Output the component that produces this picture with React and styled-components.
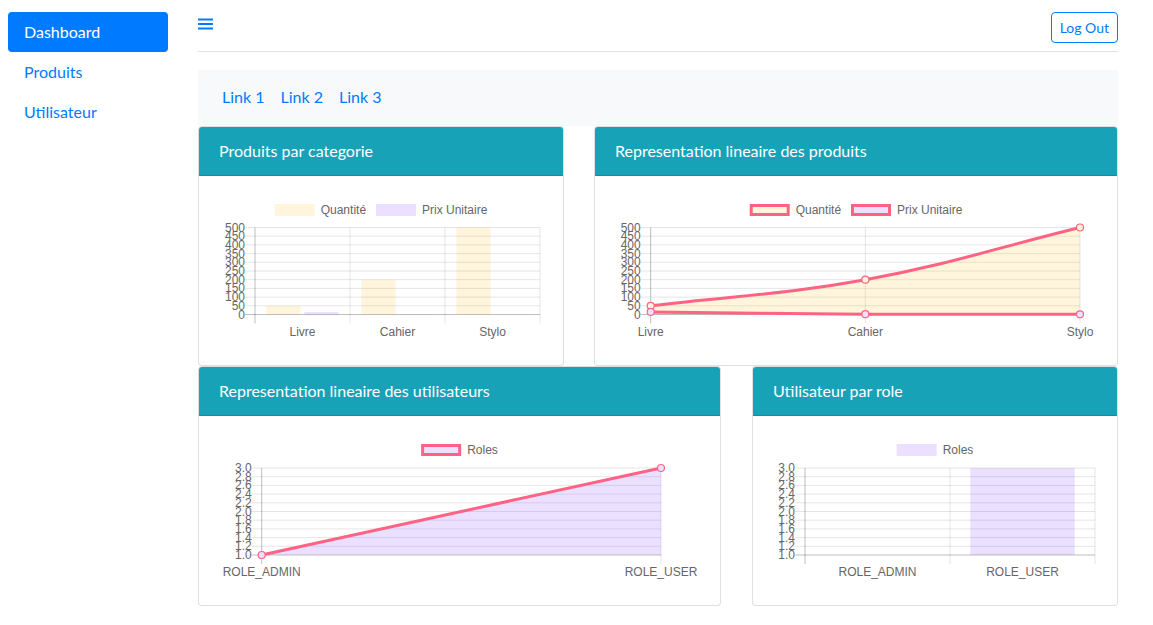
import React from "react";
import styled, { createGlobalStyle } from "styled-components";

const BLUE = "#007bff";
const TEAL = "#17a2b8";
const PINK = "rgb(255,99,132)";
const YELLOW_FILL = "rgba(255,206,86,0.2)";
const PURPLE_FILL = "rgba(153,102,255,0.2)";
const GRID = "rgba(0,0,0,0.1)";
const AXIS = "rgba(0,0,0,0.25)";

const GlobalStyle = createGlobalStyle`
  html, body { margin: 0; padding: 0; background: #fff; }
  body { font-family: Lato, "Noto Sans", "Liberation Sans", sans-serif; color: #212529; }
  * { box-sizing: border-box; }
`;

const Layout = styled.div`
  display: flex;
  min-height: 625px;
`;

const Sidebar = styled.nav`
  width: 198px;
  flex-shrink: 0;
  padding: 12px 30px 0 8px;
  display: flex;
  flex-direction: column;
`;

const NavItem = styled.a`
  height: 40px;
  display: flex;
  align-items: center;
  padding: 0 16px 2px;
  border-radius: 4px;
  font-size: 16px;
  text-decoration: none;
  color: ${(p) => (p.$active ? "#fff" : BLUE)};
  background: ${(p) => (p.$active ? BLUE : "transparent")};
`;

const Main = styled.main`
  flex: 1;
  min-width: 0;
  padding-right: 35px;
`;

const TopBar = styled.header`
  height: 52px;
  border-bottom: 1px solid #dee2e6;
  display: flex;
  justify-content: space-between;
  align-items: flex-start;
`;

const MenuButton = styled.button`
  margin-top: 18px;
  padding: 0;
  border: 0;
  background: none;
  color: ${BLUE};
  line-height: 0;
  cursor: pointer;
`;

const LogoutButton = styled.button`
  margin-top: 12px;
  height: 31px;
  padding: 0 8px 1px;
  border: 1px solid ${BLUE};
  border-radius: 4px;
  background: #fff;
  color: ${BLUE};
  font-family: inherit;
  font-size: 14px;
  cursor: pointer;
`;

const SubNav = styled.nav`
  margin-top: 18px;
  height: 56px;
  background: #f8f9fa;
  display: flex;
  align-items: center;
  padding: 0 0 4px 16px;
`;

const SubNavLink = styled.a`
  padding: 0 8px;
  font-size: 16px;
  color: ${BLUE};
  text-decoration: none;
`;

const CardRow = styled.div`
  display: grid;
  grid-template-columns: ${(p) => p.$cols};
  column-gap: ${(p) => p.$gap};
`;

const Card = styled.section`
  border: 1px solid rgba(0, 0, 0, 0.125);
  border-radius: 4px;
  background: #fff;
  overflow: hidden;
`;

const CardHeader = styled.h5`
  margin: 0;
  height: 49px;
  padding: 0 20px 2px;
  display: flex;
  align-items: center;
  background: ${TEAL};
  color: #fff;
  font-size: 16px;
  font-weight: 400;
  border-bottom: 1px solid rgba(0, 0, 0, 0.125);
`;

const ChartSvg = styled.svg`
  display: block;
  width: 100%;
  height: 189px;
  text {
    font-family: "Liberation Sans", Arial, sans-serif;
    font-size: 12px;
    fill: #666;
  }
`;

/* ---------- chart helpers ---------- */

const TEXT_W = { "Quantité": 45.3, "Prix Unitaire": 65.3, Roles: 30.7 };

function Legend({ width, items, stroked }) {
  const itemW = items.map((it) => 46 + (TEXT_W[it.label] || 40));
  const total = itemW.reduce((a, b) => a + b, 0) + 10 * (items.length - 1);
  let x = width / 2 - total / 2;
  return (
    <g>
      {items.map((it, i) => {
        const bx = x;
        x += itemW[i] + 10;
        return (
          <g key={it.label}>
            <rect
              x={bx + (stroked ? 1.5 : 0)}
              y={stroked ? 29.5 : 28}
              width={stroked ? 37 : 40}
              height={stroked ? 9 : 12}
              fill={it.fill}
              stroke={stroked ? PINK : "none"}
              strokeWidth={stroked ? 3 : 0}
            />
            <text x={bx + 46} y={34} dominantBaseline="central">
              {it.label}
            </text>
          </g>
        );
      })}
    </g>
  );
}

function Axes({ plot, yLabels, vLines, xLabels }) {
  const { l, r, t, b } = plot;
  const n = yLabels.length;
  const step = (b - t) / (n - 1);
  return (
    <g>
      {yLabels.map((lab, i) => {
        const y = t + i * step;
        const isZero = i === n - 1;
        return (
          <g key={lab}>
            <line x1={l - 10} x2={r} y1={y} y2={y} stroke={isZero ? AXIS : GRID} strokeWidth="1" />
            <text x={l - 10} y={y} textAnchor="end" dominantBaseline="central">
              {lab}
            </text>
          </g>
        );
      })}
      {vLines.map((x, i) => (
        <line
          key={i}
          x1={x}
          x2={x}
          y1={t}
          y2={b + 9}
          stroke={i === 0 ? AXIS : GRID}
          strokeWidth="1"
        />
      ))}
      {xLabels.map((xl) => (
        <text key={xl.label} x={xl.x} y={b + 17} textAnchor="middle" dominantBaseline="central">
          {xl.label}
        </text>
      ))}
    </g>
  );
}

function splinePath(pts, t, top, bottom) {
  const clamp = (v) => Math.max(top, Math.min(bottom, v));
  const cps = pts.map((p, i) => {
    const prev = pts[i - 1] || p;
    const next = pts[i + 1] || p;
    const d01 = Math.hypot(p.x - prev.x, p.y - prev.y);
    const d12 = Math.hypot(next.x - p.x, next.y - p.y);
    let s01 = d01 / (d01 + d12);
    let s12 = d12 / (d01 + d12);
    if (isNaN(s01)) s01 = 0;
    if (isNaN(s12)) s12 = 0;
    const fa = t * s01;
    const fb = t * s12;
    return {
      px: p.x - fa * (next.x - prev.x),
      py: clamp(p.y - fa * (next.y - prev.y)),
      nx: p.x + fb * (next.x - prev.x),
      ny: clamp(p.y + fb * (next.y - prev.y)),
    };
  });
  let d = `M${pts[0].x},${pts[0].y}`;
  for (let i = 1; i < pts.length; i++) {
    d += ` C${cps[i - 1].nx},${cps[i - 1].ny} ${cps[i].px},${cps[i].py} ${pts[i].x},${pts[i].y}`;
  }
  return d;
}

function LineSeries({ pts, fill, plot }) {
  const d = splinePath(pts, 0.4, plot.t, plot.b);
  const first = pts[0];
  const last = pts[pts.length - 1];
  const area = `${d} L${last.x},${plot.b} L${first.x},${plot.b} Z`;
  return (
    <g>
      <path d={area} fill={fill} stroke="none" />
      <path d={d} fill="none" stroke={PINK} strokeWidth="3" />
    </g>
  );
}

function Points({ pts, fill }) {
  return (
    <g>
      {pts.map((p, i) => (
        <g key={i}>
          <circle cx={p.x} cy={p.y} r="3.5" fill="#fff" />
          <circle cx={p.x} cy={p.y} r="3.5" fill={fill} stroke={PINK} strokeWidth="1.2" />
        </g>
      ))}
    </g>
  );
}

const PRODUCT_Y = ["500", "450", "400", "350", "300", "250", "200", "150", "100", "50", "0"];
const ROLE_Y = ["3.0", "2.8", "2.6", "2.4", "2.2", "2.0", "1.8", "1.6", "1.4", "1.2", "1.0"];
const PRODUCTS = ["Livre", "Cahier", "Stylo"];
const QTY = [50, 200, 500];
const PRICE = [15, 2, 1];

function ProductBarChart() {
  const W = 364;
  const plot = { l: 56, r: 341, t: 51.5, b: 138.5 };
  const cw = (plot.r - plot.l) / 3;
  const h = plot.b - plot.t;
  const slot = cw * 0.4;
  const bw = slot * 0.9;
  return (
    <ChartSvg viewBox={`0 0 ${W} 189`}>
      <Legend
        width={W}
        items={[
          { label: "Quantité", fill: YELLOW_FILL },
          { label: "Prix Unitaire", fill: PURPLE_FILL },
        ]}
      />
      {PRODUCTS.map((p, i) => {
        const c = plot.l + cw * (i + 0.5);
        const hq = (QTY[i] / 500) * h;
        const hp = (PRICE[i] / 500) * h;
        return (
          <g key={p}>
            <rect x={c - slot + slot * 0.05} y={plot.b - hq} width={bw} height={hq} fill={YELLOW_FILL} />
            <rect x={c + slot * 0.05} y={plot.b - hp} width={bw} height={hp} fill={PURPLE_FILL} />
          </g>
        );
      })}
      <Axes
        plot={plot}
        yLabels={PRODUCT_Y}
        vLines={[0, 1, 2, 3].map((i) => plot.l + cw * i)}
        xLabels={PRODUCTS.map((p, i) => ({ label: p, x: plot.l + cw * (i + 0.5) }))}
      />
    </ChartSvg>
  );
}

function ProductLineChart() {
  const W = 522;
  const plot = { l: 55.7, r: 485, t: 51.5, b: 138.5 };
  const xs = [plot.l, (plot.l + plot.r) / 2, plot.r];
  const h = plot.b - plot.t;
  const q = xs.map((x, i) => ({ x, y: plot.b - (QTY[i] / 500) * h }));
  const pr = xs.map((x, i) => ({ x, y: plot.b - (PRICE[i] / 500) * h }));
  return (
    <ChartSvg viewBox={`0 0 ${W} 189`}>
      <Legend
        width={W}
        stroked
        items={[
          { label: "Quantité", fill: YELLOW_FILL },
          { label: "Prix Unitaire", fill: PURPLE_FILL },
        ]}
      />
      <Axes
        plot={plot}
        yLabels={PRODUCT_Y}
        vLines={xs}
        xLabels={PRODUCTS.map((p, i) => ({ label: p, x: xs[i] }))}
      />
      <LineSeries pts={q} fill={YELLOW_FILL} plot={plot} />
      <LineSeries pts={pr} fill={PURPLE_FILL} plot={plot} />
      <Points pts={q} fill={YELLOW_FILL} />
      <Points pts={pr} fill={PURPLE_FILL} />
    </ChartSvg>
  );
}

function UserLineChart() {
  const W = 521;
  const plot = { l: 62.7, r: 462, t: 52, b: 139 };
  const pts = [
    { x: plot.l, y: plot.b },
    { x: plot.r, y: plot.t },
  ];
  return (
    <ChartSvg viewBox={`0 0 ${W} 189`}>
      <Legend width={W} stroked items={[{ label: "Roles", fill: PURPLE_FILL }]} />
      <Axes
        plot={plot}
        yLabels={ROLE_Y}
        vLines={[plot.l, plot.r]}
        xLabels={[
          { label: "ROLE_ADMIN", x: plot.l },
          { label: "ROLE_USER", x: plot.r },
        ]}
      />
      <LineSeries pts={pts} fill={PURPLE_FILL} plot={plot} />
      <Points pts={pts} fill={PURPLE_FILL} />
    </ChartSvg>
  );
}

function UserBarChart() {
  const W = 364;
  const plot = { l: 52, r: 342, t: 52, b: 139 };
  const cw = (plot.r - plot.l) / 2;
  const bw = cw * 0.8 * 0.9;
  const cUser = plot.l + cw * 1.5;
  return (
    <ChartSvg viewBox={`0 0 ${W} 189`}>
      <Legend width={W} items={[{ label: "Roles", fill: PURPLE_FILL }]} />
      <rect x={cUser - bw / 2} y={plot.t} width={bw} height={plot.b - plot.t} fill={PURPLE_FILL} />
      <Axes
        plot={plot}
        yLabels={ROLE_Y}
        vLines={[0, 1, 2].map((i) => plot.l + cw * i)}
        xLabels={[
          { label: "ROLE_ADMIN", x: plot.l + cw * 0.5 },
          { label: "ROLE_USER", x: cUser },
        ]}
      />
    </ChartSvg>
  );
}

function ChartCard({ title, children }) {
  return (
    <Card>
      <CardHeader>{title}</CardHeader>
      {children}
    </Card>
  );
}

export default function App() {
  return (
    <>
      <GlobalStyle />
      <Layout>
        <Sidebar>
          <NavItem href="#" $active>
            Dashboard
          </NavItem>
          <NavItem href="#">Produits</NavItem>
          <NavItem href="#">Utilisateur</NavItem>
        </Sidebar>
        <Main>
          <TopBar>
            <MenuButton aria-label="menu">
              <svg width="15" height="12" viewBox="0 0 15 12">
                <rect x="0" y="0.5" width="15" height="2" fill="currentColor" />
                <rect x="0" y="5" width="15" height="2" fill="currentColor" />
                <rect x="0" y="9.5" width="15" height="2" fill="currentColor" />
              </svg>
            </MenuButton>
            <LogoutButton>Log Out</LogoutButton>
          </TopBar>
          <SubNav>
            <SubNavLink href="#">Link 1</SubNavLink>
            <SubNavLink href="#">Link 2</SubNavLink>
            <SubNavLink href="#">Link 3</SubNavLink>
          </SubNav>
          <CardRow $cols="366px 1fr" $gap="30px">
            <ChartCard title="Produits par categorie">
              <ProductBarChart />
            </ChartCard>
            <ChartCard title="Representation lineaire des produits">
              <ProductLineChart />
            </ChartCard>
          </CardRow>
          <CardRow $cols="1fr 366px" $gap="31px">
            <ChartCard title="Representation lineaire des utilisateurs">
              <UserLineChart />
            </ChartCard>
            <ChartCard title="Utilisateur par role">
              <UserBarChart />
            </ChartCard>
          </CardRow>
        </Main>
      </Layout>
    </>
  );
}
